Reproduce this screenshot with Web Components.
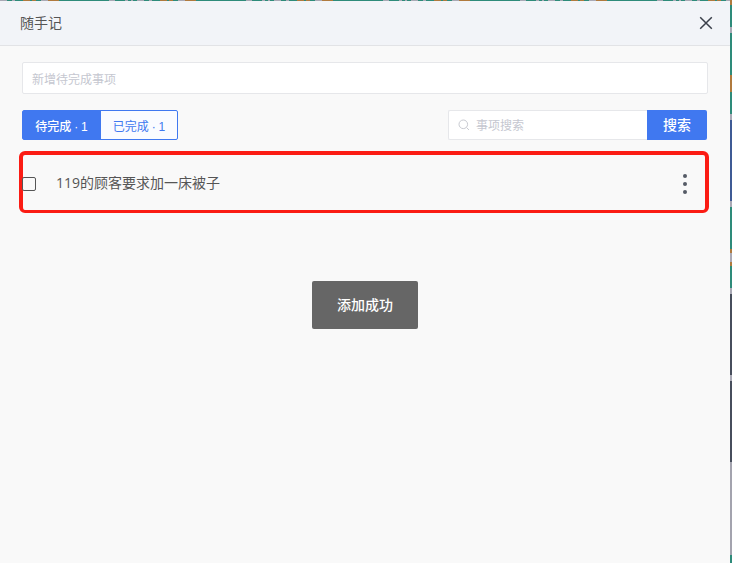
<!DOCTYPE html>
<html>
<head>
	<meta charset="utf-8">
	<title>随手记</title>
	<style type="text/css">
		html, body {
			margin:0;
			height:100%;
			overflow:hidden;
			font-family:"Liberation Sans", "Noto Sans CJK SC", sans-serif;
		}
	</style>
</head>
<body>

<desk-frame>
	<note-dialog>
		<span slot="title">随手记</span>
		<note-input>新增待完成事项</note-input>
		<note-toolbar>
			<note-tabs slot="tabs"></note-tabs>
			<search-box slot="search">事项搜索</search-box>
		</note-toolbar>
		<todo-item>119的顾客要求加一床被子</todo-item>
		<toast-msg slot="overlay">添加成功</toast-msg>
	</note-dialog>
</desk-frame>

<script type="text/javascript">

// small helper, every element below is the same shape
function define(name, html) {
	customElements.define(name, class extends HTMLElement {
		constructor() {
			super();
			this.attachShadow({mode:'open'}).innerHTML = html;
		}
	});
}

// what peeks out behind the dialog: 1px on top, 2px on the right
define('desk-frame', `
	<style>
	:host {
		display:flex;
		flex-direction:column;
		height:563px;
		width:732px;
	}
	.top {
		height:1px;
		flex:none;
		background:repeating-linear-gradient(90deg,
			#a9a9b5 0 7px, #2e8b7a 7px 12px, #a9a9b5 12px 15px, #2e8b7a 15px 23px,
			#b07a3e 23px 30px, #2e8b7a 30px 32px, #b07a3e 32px 36px, #2e8b7a 36px 41px,
			#a9a9b5 41px 48px, #b07a3e 48px 59px, #2e8b7a 59px 109px,
			#a9a9b5 109px 115px, #2e8b7a 115px 125px, #a9a9b5 125px 128px,
			#2e8b7a 128px 131px, #a9a9b5 131px 133px, #2e8b7a 133px 137px);
	}
	.row {
		display:flex;
		flex:1;
		min-height:0;
	}
	.side {
		width:2px;
		flex:none;
		margin-top:-1px;
		background:linear-gradient(180deg,
			#b07a3e 0 5px, #2e8b7a 5px 27px, #a9a9b5 27px 33px, #2e8b7a 33px 75px,
			#b07a3e 75px 92px, #2e8b7a 92px 114px, #a9a9b5 114px 120px,
			#3f5b95 120px 201px, #a9a9b5 201px 207px, #2e8b7a 207px 249px,
			#b07a3e 249px 253px, #a9a9b5 253px 262px, #b07a3e 262px 266px,
			#2e8b7a 266px 288px, #a9a9b5 288px 294px, #474e5c 294px 375px,
			#a9a9b5 375px 381px, #474e5c 381px 462px, #a3a3ae 462px 555px,
			#2e8b7a 555px 563px);
	}
	</style>
	<div class="top"></div>
	<div class="row">
		<slot></slot>
		<div class="side"></div>
	</div>
`);

define('note-dialog', `
	<style>
	:host {
		display:flex;
		flex-direction:column;
		flex:1;
		min-width:0;
		position:relative;
		background:#f9f9f9;
		color:#555;
	}
	header {
		display:flex;
		align-items:center;
		justify-content:space-between;
		height:44px;
		padding:0 17px 0 20px;
		background:#f2f4f8;
		border-bottom:1px solid #e2e3e6;
		font-size:14px;
		flex:none;
	}
	.title {
		padding-bottom:2px;
	}
	svg {
		display:block;
	}
	main {
		display:flex;
		flex-direction:column;
		padding:16px 22px 0;
	}
	</style>
	<header>
		<div class="title"><slot name="title"></slot></div>
		<svg width="14" height="14" viewBox="0 0 14 14" fill="none" stroke="#3a3f4a" stroke-width="1.5">
			<path d="M1.2 1.2 12.8 12.8M12.8 1.2 1.2 12.8"/>
		</svg>
	</header>
	<main><slot></slot></main>
	<slot name="overlay"></slot>
`);

define('note-input', `
	<style>
	:host {
		display:flex;
		align-items:center;
		box-sizing:border-box;
		height:32px;
		padding:0 9px;
		background:#fff;
		border:1px solid #e6e7ea;
		border-radius:2px;
		font-size:12px;
		color:#c5c7d0;
	}
	</style>
	<slot></slot>
`);

define('note-toolbar', `
	<style>
	:host {
		display:flex;
		justify-content:space-between;
		height:30px;
		margin-top:16px;
	}
	</style>
	<slot name="tabs"></slot>
	<slot name="search"></slot>
`);

define('note-tabs', `
	<style>
	:host {
		display:flex;
		box-sizing:border-box;
		width:156px;
		border:1px solid #4078f0;
		border-radius:2px;
		font-size:12px;
		font-weight:500;
		word-spacing:-0.5px;
		color:#4078f0;
		background:#fafbff;
	}
	div {
		display:flex;
		align-items:center;
		justify-content:center;
	}
	.on {
		width:78px;
		padding-right:1px;
		box-sizing:border-box;
		background:#4078f0;
		color:#fff;
	}
	.off {
		flex:1;
		font-weight:400;
	}
	</style>
	<div class="on">待完成 · 1</div>
	<div class="off">已完成 · 1</div>
`);

define('search-box', `
	<style>
	:host {
		display:flex;
		width:259px;
		margin-right:1px;
	}
	.field {
		display:flex;
		align-items:center;
		gap:6px;
		flex:1;
		box-sizing:border-box;
		padding:0 0 2px 9px;
		background:#fff;
		border:1px solid #e6e7ea;
		border-right:none;
		border-radius:2px 0 0 2px;
		font-size:12px;
		color:#c5c7d0;
	}
	svg {
		display:block;
		flex:none;
		margin-top:2px;
	}
	.btn {
		display:flex;
		align-items:center;
		justify-content:center;
		box-sizing:border-box;
		width:60px;
		padding-bottom:2px;
		background:#4078f0;
		color:#fff;
		font-size:14px;
		font-weight:500;
		border-radius:0 2px 2px 0;
	}
	</style>
	<div class="field">
		<svg width="12" height="12" viewBox="0 0 12 12" fill="none" stroke="#c8cad1" stroke-width="1">
			<circle cx="5.3" cy="5.3" r="4.3"/>
			<path d="M8.5 8.5 11 11"/>
		</svg>
		<slot></slot>
	</div>
	<div class="btn">搜索</div>
`);

// the red frame comes from the screenshot annotation, it hugs the row
define('todo-item', `
	<style>
	:host {
		display:flex;
		align-items:center;
		box-sizing:border-box;
		height:62px;
		margin:11px -1px 0 -3px;
		padding-right:18px;
		border:solid #fb1c14;
		border-width:4px 4px 3px 4px;
		border-radius:6px;
		font-size:14px;
		color:#555;
	}
	.box {
		flex:none;
		box-sizing:border-box;
		width:14px;
		height:14px;
		margin:2px 20px 0 -1px;
		border:1px solid #555;
		border-radius:2px;
		background:#f9f9f9;
	}
	.text {
		flex:1;
		padding-bottom:2px;
		font-family:"Open Sans", "Noto Sans CJK SC", sans-serif;
	}
	.more {
		display:flex;
		flex-direction:column;
		gap:4px;
		flex:none;
		margin-top:3px;
	}
	.more i {
		display:block;
		width:4px;
		height:4px;
		border-radius:50%;
		background:#555b66;
	}
	</style>
	<div class="box"></div>
	<div class="text"><slot></slot></div>
	<div class="more"><i></i><i></i><i></i></div>
`);

// toast floats over the dialog
define('toast-msg', `
	<style>
	:host {
		position:absolute;
		left:312px;
		top:280px;
		display:flex;
		align-items:center;
		justify-content:center;
		box-sizing:border-box;
		width:106px;
		height:48px;
		padding-bottom:2px;
		background:#666;
		border-radius:2px;
		color:#fff;
		font-size:14px;
		font-weight:500;
	}
	</style>
	<slot></slot>
`);

</script>
</body>
</html>
